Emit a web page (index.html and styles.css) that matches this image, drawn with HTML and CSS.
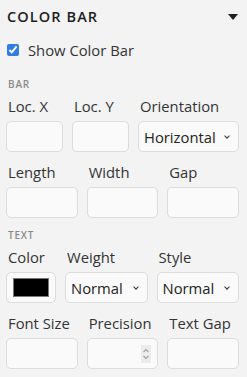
FILE: index.html
```
<!DOCTYPE html>
<html lang="en">
<head>
    <meta charset="UTF-8">
    <title>Color Bar</title>
    <link rel="stylesheet" href="styles.css">
</head>
<body>
    <div class="panel">
        <div class="panel-head">
            <span class="panel-title">COLOR BAR</span>
            <span class="caret"></span>
        </div>

        <label class="check-row">
            <input type="checkbox" checked>
            <span>Show Color Bar</span>
        </label>

        <div class="section-label">BAR</div>
        <div class="row row-bar">
            <div class="field">
                <label>Loc. X</label>
                <input type="text">
            </div>
            <div class="field">
                <label>Loc. Y</label>
                <input type="text">
            </div>
            <div class="field">
                <label>Orientation</label>
                <div class="select">Horizontal <span class="chev"></span></div>
            </div>
        </div>
        <div class="row row-even">
            <div class="field">
                <label>Length</label>
                <input type="text">
            </div>
            <div class="field">
                <label>Width</label>
                <input type="text">
            </div>
            <div class="field">
                <label>Gap</label>
                <input type="text">
            </div>
        </div>

        <div class="section-label">TEXT</div>
        <div class="row row-text">
            <div class="field">
                <label>Color</label>
                <div class="color-box"><span class="swatch"></span></div>
            </div>
            <div class="field">
                <label>Weight</label>
                <div class="select">Normal <span class="chev"></span></div>
            </div>
            <div class="field">
                <label>Style</label>
                <div class="select">Normal <span class="chev"></span></div>
            </div>
        </div>
        <div class="row row-even">
            <div class="field">
                <label>Font Size</label>
                <input type="text">
            </div>
            <div class="field">
                <label>Precision</label>
                <div class="num-box">
                    <span class="spin">
                        <svg width="8" height="14" viewBox="0 0 8 14"><path d="M1.5 5 L4 2.5 L6.5 5 M1.5 9 L4 11.5 L6.5 9" fill="none" stroke="#a0a0a0" stroke-width="1.1"/></svg>
                    </span>
                </div>
            </div>
            <div class="field">
                <label>Text Gap</label>
                <input type="text">
            </div>
        </div>
    </div>
</body>
</html>
```

FILE: styles.css
```
* {
    box-sizing: border-box;
    margin: 0;
    padding: 0;
}

body {
    font-family: "Open Sans", "Noto Sans", sans-serif;
    background-color: #f3f3f3;
    color: #222;
    padding: 0 8px 0 6px;
}

.panel-head {
    display: flex;
    justify-content: space-between;
    align-items: center;
    height: 33px;
    padding-left: 1px;
}

.panel-title {
    font-size: 14.5px;
    font-weight: 600;
    letter-spacing: 1.1px;
    color: #1e1e1e;
}

.caret {
    width: 0;
    height: 0;
    border-left: 5px solid transparent;
    border-right: 5px solid transparent;
    border-top: 6px solid #1e1e1e;
    margin-right: 1px;
}

.check-row {
    display: flex;
    align-items: center;
    height: 34px;
    font-size: 14.8px;
    color: #333;
}

.check-row input {
    width: 12px;
    height: 12px;
    margin: 0 9px 0 1px;
    accent-color: #2f7de1;
}

.section-label {
    font-size: 10px;
    font-weight: 600;
    letter-spacing: 0.8px;
    color: #8a8a8a;
    padding-left: 2px;
    margin-top: 10px;
    height: 14px;
    line-height: 14px;
}

.row {
    display: grid;
    column-gap: 9px;
    margin-top: 5px;
}

.row + .row {
    margin-top: 10px;
}

.row-bar {
    grid-template-columns: 57px 57px 1fr;
}

.row-even {
    grid-template-columns: 1fr 1fr 1fr;
}

.row-text {
    grid-template-columns: 50px 1fr 1fr;
}

.field label {
    display: block;
    font-size: 14.8px;
    line-height: 20px;
    height: 20px;
    margin-bottom: 5px;
    padding-left: 2px;
    color: #333;
}

.field input,
.select,
.color-box,
.num-box {
    display: block;
    width: 100%;
    height: 31px;
    border: 1px solid #dcdcdc;
    border-radius: 5px;
    background: #fafafa;
    font-family: inherit;
    font-size: 14.8px;
}

.select {
    display: flex;
    align-items: center;
    justify-content: space-between;
    padding: 0 9px 0 5px;
    color: #222;
}

.chev {
    width: 4px;
    height: 4px;
    border-right: 1.2px solid #333;
    border-bottom: 1.2px solid #333;
    transform: rotate(45deg);
    margin-top: -2px;
}

.color-box {
    padding: 5px 6px;
}

.swatch {
    display: block;
    width: 100%;
    height: 100%;
    background: #000;
    border: 1px solid #777;
}

.num-box {
    display: flex;
    justify-content: flex-end;
    align-items: center;
    padding-right: 6px;
}

.spin {
    display: flex;
    align-items: center;
    justify-content: center;
    width: 10px;
    height: 18px;
    background: #ececec;
}
```
